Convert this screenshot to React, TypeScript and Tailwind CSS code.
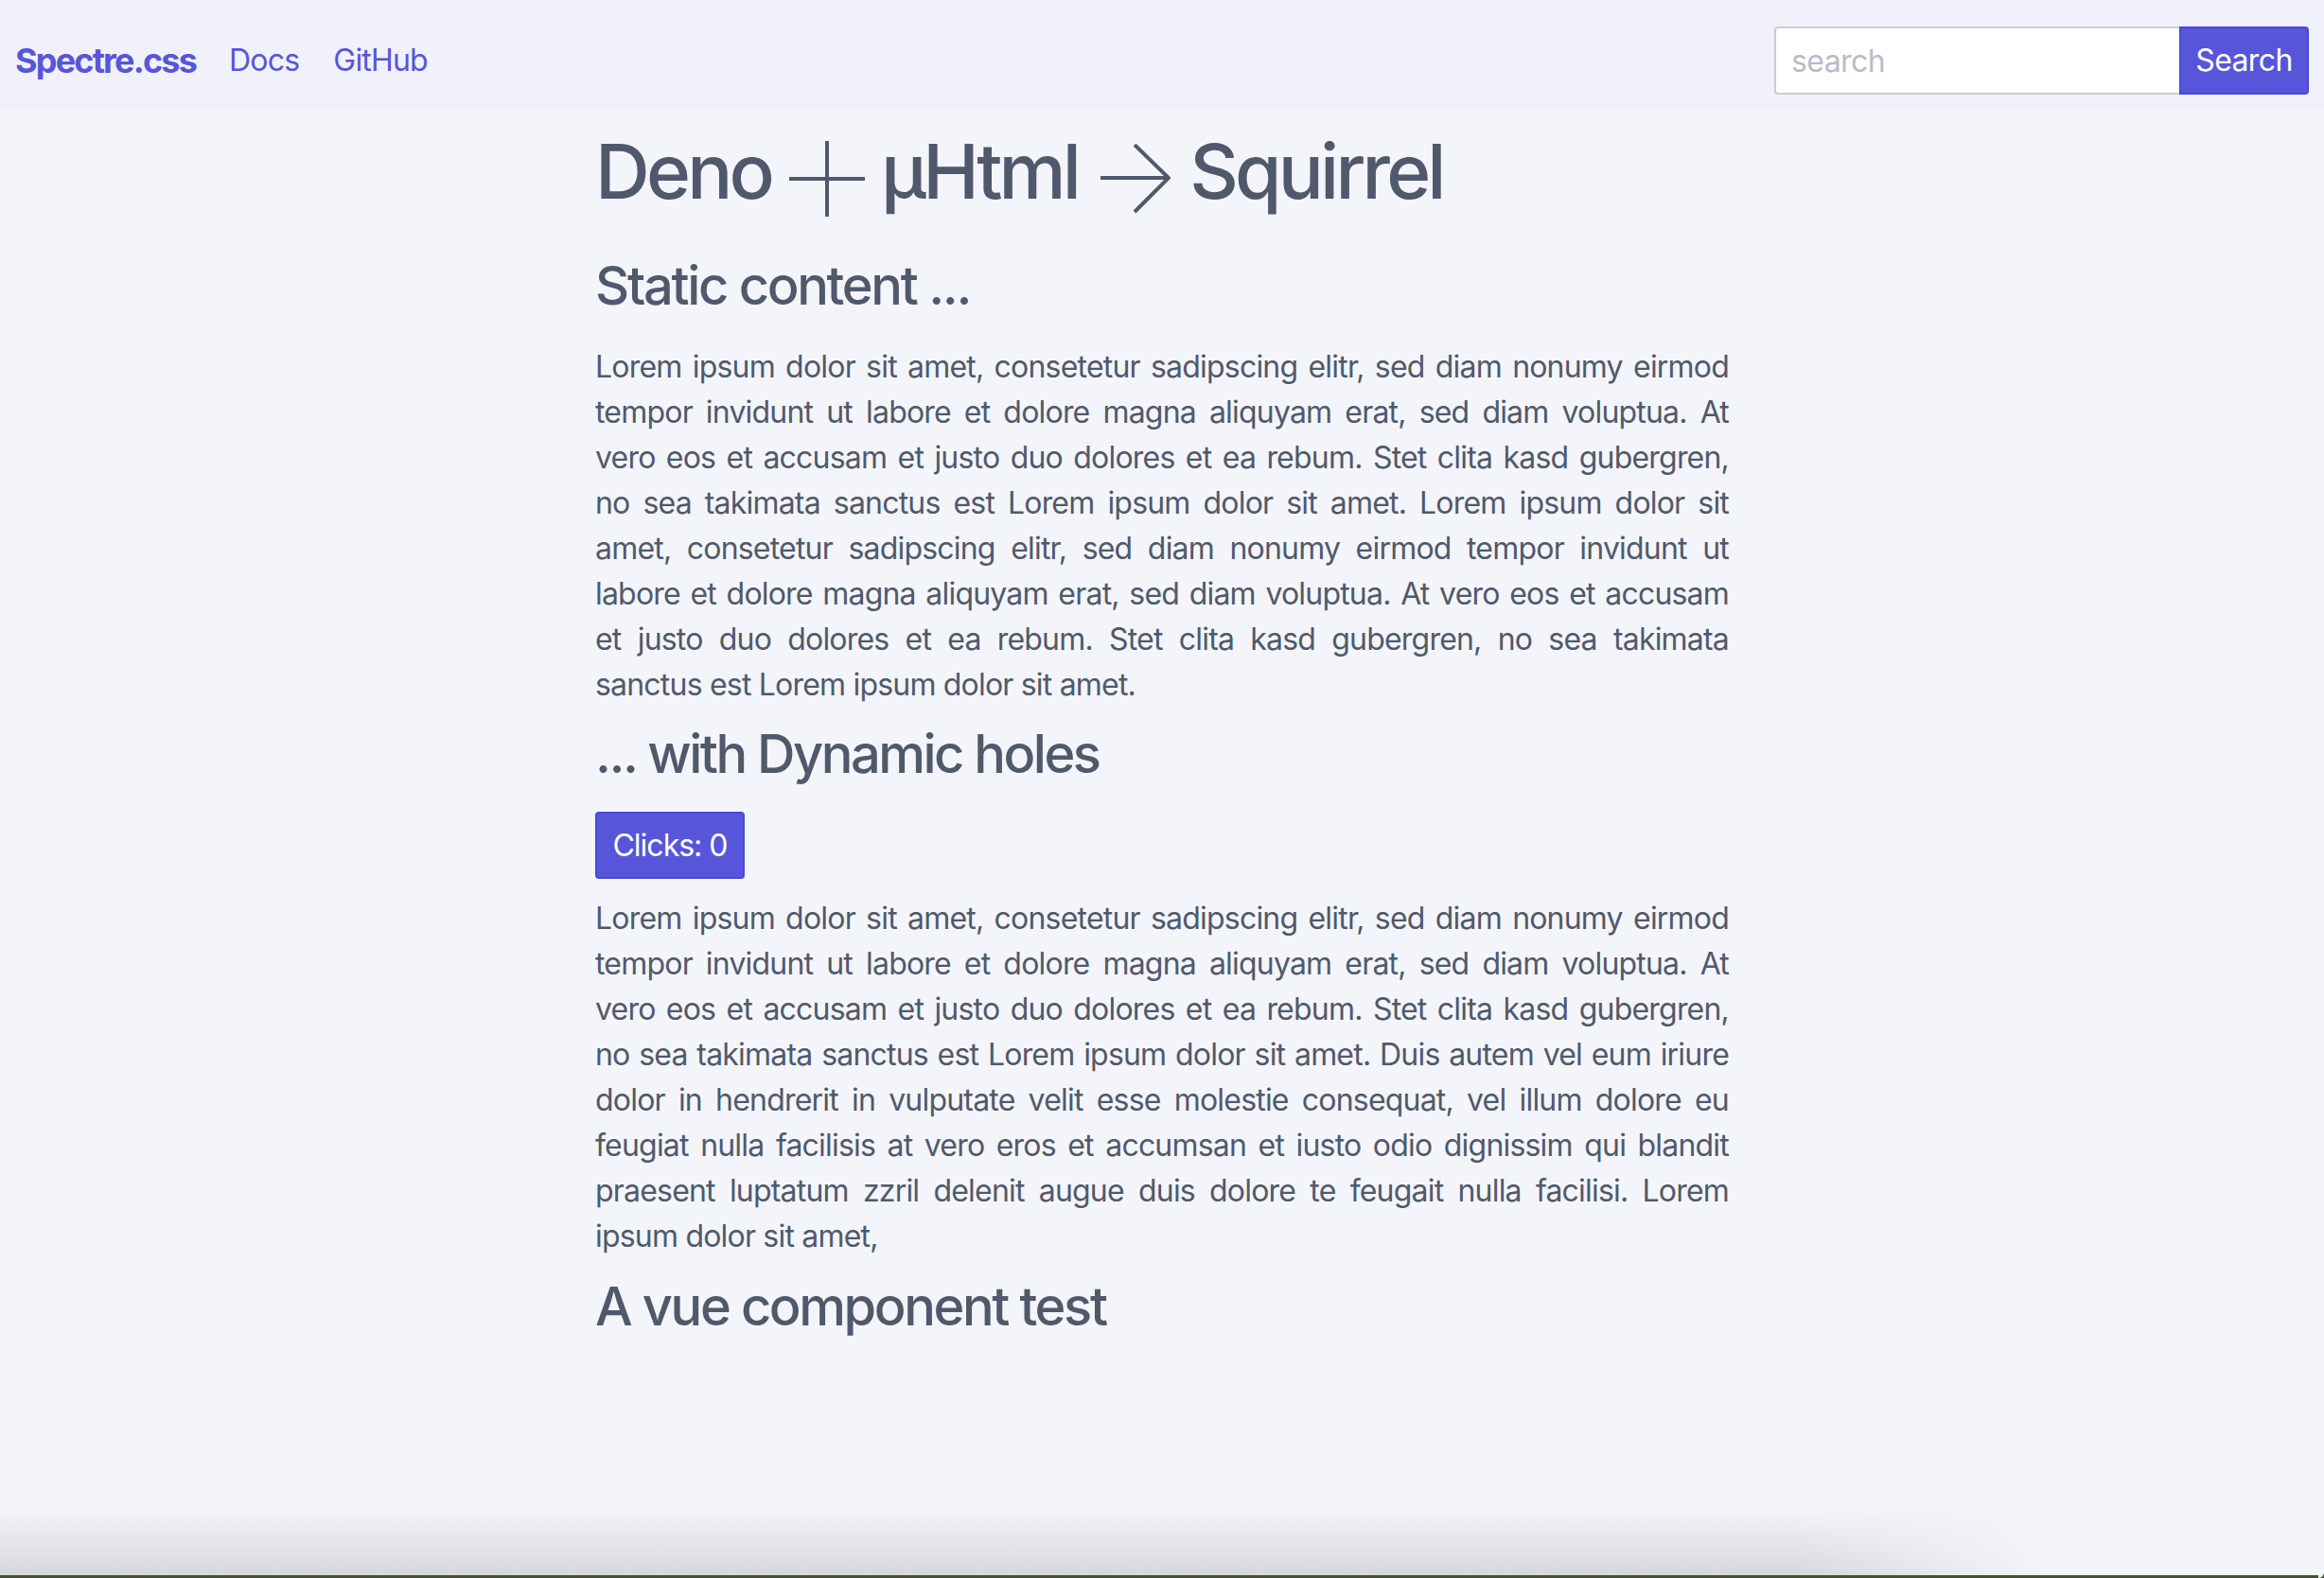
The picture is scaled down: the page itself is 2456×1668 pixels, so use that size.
import React from 'react';

const FONT = { fontFamily: 'Inter, "Noto Sans", "Liberation Sans", sans-serif' };

const staticLines = [
  'Lorem ipsum dolor sit amet, consetetur sadipscing elitr, sed diam nonumy eirmod',
  'tempor invidunt ut labore et dolore magna aliquyam erat, sed diam voluptua. At',
  'vero eos et accusam et justo duo dolores et ea rebum. Stet clita kasd gubergren,',
  'no sea takimata sanctus est Lorem ipsum dolor sit amet. Lorem ipsum dolor sit',
  'amet, consetetur sadipscing elitr, sed diam nonumy eirmod tempor invidunt ut',
  'labore et dolore magna aliquyam erat, sed diam voluptua. At vero eos et accusam',
  'et justo duo dolores et ea rebum. Stet clita kasd gubergren, no sea takimata',
  'sanctus est Lorem ipsum dolor sit amet.',
];

const dynamicLines = [
  'Lorem ipsum dolor sit amet, consetetur sadipscing elitr, sed diam nonumy eirmod',
  'tempor invidunt ut labore et dolore magna aliquyam erat, sed diam voluptua. At',
  'vero eos et accusam et justo duo dolores et ea rebum. Stet clita kasd gubergren,',
  'no sea takimata sanctus est Lorem ipsum dolor sit amet. Duis autem vel eum iriure',
  'dolor in hendrerit in vulputate velit esse molestie consequat, vel illum dolore eu',
  'feugiat nulla facilisis at vero eros et accumsan et iusto odio dignissim qui blandit',
  'praesent luptatum zzril delenit augue duis dolore te feugait nulla facilisi. Lorem',
  'ipsum dolor sit amet,',
];

// each line is its own row so breaks match the reference; all but the last are justified
const Paragraph: React.FC<{ lines: string[] }> = ({ lines }) => (
  <p className="text-[32px] leading-[48px] tracking-[-0.8px] text-[#50596c]">
    {lines.map((line, i) => (
      <span
        key={i}
        className={
          i < lines.length - 1
            ? 'block whitespace-nowrap text-justify [text-align-last:justify]'
            : 'block whitespace-nowrap'
        }
      >
        {line}
      </span>
    ))}
  </p>
);

const PlusMark = () => (
  <svg role="img" aria-label="+" width="82" height="80" viewBox="0 0 82 80" className="mt-[16px] shrink-0">
    <path d="M1 40 H81 M41 0 V80" stroke="#50596c" strokeWidth="4" fill="none" />
  </svg>
);

const ArrowMark = () => (
  <svg role="img" aria-label="→" width="74" height="74" viewBox="0 0 74 74" className="mt-[19px] shrink-0">
    <path d="M0 36 H70 M36 1 L72 36 L36 72" stroke="#50596c" strokeWidth="4" fill="none" />
  </svg>
);

export default function App() {
  const [clicks, setClicks] = React.useState(0);

  return (
    <div className="relative h-[1668px] overflow-hidden bg-[#f4f5fa] text-[#50596c]" style={FONT}>
      <header className="flex h-[116px] items-start justify-between bg-[#f0f1fa] px-[16px] pt-[28px]">
        <div className="flex h-[72px] items-center">
          <a className="text-[36px] font-bold leading-[72px] tracking-[-1.8px] text-[#5755d9]">Spectre.css</a>
          <a className="ml-[35px] text-[32px] leading-[72px] tracking-[-0.8px] text-[#5755d9]">Docs</a>
          <a className="ml-[36px] text-[32px] leading-[72px] tracking-[-0.8px] text-[#5755d9]">GitHub</a>
        </div>
        <div className="flex h-[72px]">
          <input
            placeholder="search"
            className="h-[72px] w-[428px] rounded-l-[4px] border-2 border-r-0 border-[#c9ccd6] bg-white pl-[16px] text-[32px] tracking-[-0.6px] text-[#50596c] outline-none placeholder:text-[#b6bcc8]"
          />
          <button className="h-[72px] w-[137px] rounded-r-[4px] border-2 border-[#4b48d6] bg-[#5755d9] text-[32px] tracking-[-0.6px] text-white">
            Search
          </button>
        </div>
      </header>

      <main className="mx-auto w-[1198px] pt-[17px]">
        <h1 className="flex h-[96px] items-start text-[80px] font-medium leading-[96px] tracking-[-3.8px]">
          <span>Deno</span>
          <span className="ml-[18px] mr-[16px] flex"><PlusMark /></span>
          <span>µHtml</span>
          <span className="ml-[24px] mr-[20px] flex"><ArrowMark /></span>
          <span>Squirrel</span>
        </h1>

        <h3 className="mt-[40px] text-[56px] font-medium leading-[67px] tracking-[-2.3px]">Static content ...</h3>
        <div className="mt-[28px]">
          <Paragraph lines={staticLines} />
        </div>

        <h3 className="mt-[16px] text-[56px] font-medium leading-[67px] tracking-[-2.5px]">... with Dynamic holes</h3>
        <button
          onClick={() => setClicks(clicks + 1)}
          className="mt-[27px] h-[71px] w-[158px] rounded-[4px] border-2 border-[#4b48d6] bg-[#5755d9] text-[32px] tracking-[-1px] text-white"
        >
          Clicks: {clicks}
        </button>
        <div className="mt-[18px]">
          <Paragraph lines={dynamicLines} />
        </div>

        <h3 className="mt-[17px] text-[56px] font-medium leading-[67px] tracking-[-2.4px]">A vue component test</h3>
      </main>

      <div className="pointer-events-none absolute bottom-[3px] left-0 h-[72px] w-[2160px] bg-[linear-gradient(to_bottom,rgba(220,219,226,0),rgba(214,212,220,0.95))] [mask-image:linear-gradient(to_right,black_88%,transparent)]" />
      <div className="absolute bottom-0 left-0 h-[3px] w-full bg-[#46552b]" />
      <div className="absolute bottom-0 right-0 h-[14px] w-[6px] bg-[#46552b]">
        <div className="h-full w-full rounded-br-[10px] bg-[#f4f5fa]" />
      </div>
    </div>
  );
}
